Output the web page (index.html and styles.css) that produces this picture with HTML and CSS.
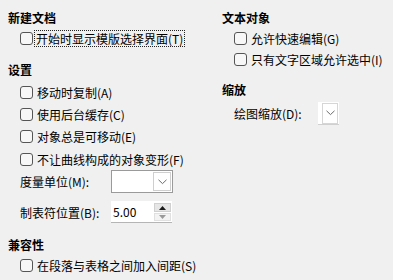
FILE: index.html
```html
<!DOCTYPE html>
<html lang="zh-CN">
<head>
<meta charset="utf-8">
<link rel="stylesheet" href="styles.css">
</head>
<body>
<div class="page">
  <div class="col col-left">
    <div class="title">新建文档</div>
    <div class="check c1"><span class="box"></span><span class="lbl focus">开始时显示模版选择界面(T)</span></div>

    <div class="title t2">设置</div>
    <div class="check first"><span class="box"></span><span class="lbl">移动时复制(A)</span></div>
    <div class="check"><span class="box"></span><span class="lbl">使用后台缓存(C)</span></div>
    <div class="check"><span class="box"></span><span class="lbl">对象总是可移动(E)</span></div>
    <div class="check"><span class="box"></span><span class="lbl">不让曲线构成的对象变形(F)</span></div>

    <div class="field f1">
      <span class="flabel">度量单位(M):</span>
      <div class="combo">
        <span class="combo-text"></span>
        <span class="combo-btn"><svg width="9" height="6" viewBox="0 0 9 6"><path d="M0.5 0.8 L4.5 4.6 L8.5 0.8" fill="none" stroke="#6b6b6b" stroke-width="1"/></svg></span>
      </div>
    </div>
    <div class="field f2">
      <span class="flabel">制表符位置(B):</span>
      <div class="spin">
        <span class="spin-text">5.00</span>
        <span class="spin-btns">
          <span class="spin-up"><svg width="7" height="4" viewBox="0 0 7 4"><path d="M0 4 L3.5 0 L7 4 Z" fill="#1a1a1a"/></svg></span>
          <span class="spin-down"><svg width="7" height="4" viewBox="0 0 7 4"><path d="M0 0 L3.5 4 L7 0 Z" fill="#9a9a9a"/></svg></span>
        </span>
      </div>
    </div>

    <div class="title t3">兼容性</div>
    <div class="check c3"><span class="box"></span><span class="lbl">在段落与表格之间加入间距(S)</span></div>
  </div>

  <div class="col col-right">
    <div class="title">文本对象</div>
    <div class="check r first-r"><span class="box"></span><span class="lbl">允许快速编辑(G)</span></div>
    <div class="check r"><span class="box"></span><span class="lbl">只有文字区域允许选中(I)</span></div>

    <div class="title t4">缩放</div>
    <div class="field f3">
      <span class="flabel narrow">绘图缩放(D):</span>
      <div class="combo small">
        <span class="combo-btn"><svg width="9" height="6" viewBox="0 0 9 6"><path d="M0.5 0.8 L4.5 4.6 L8.5 0.8" fill="none" stroke="#6b6b6b" stroke-width="1"/></svg></span>
      </div>
    </div>
  </div>
</div>
</body>
</html>
```
FILE: styles.css
```css
html, body {
  margin: 0;
  padding: 0;
  background: #f0f0f0;
}
body {
  width: 393px;
  height: 280px;
  overflow: hidden;
  font-family: "Noto Sans CJK SC", "Noto Sans", sans-serif;
  font-size: 12px;
  color: #000;
}
.page {
  display: flex;
  padding: 8.5px 0 0 8px;
}
.col-left {
  width: 214px;
}
.col-right {
  flex: 1;
}
.title {
  height: 17px;
  line-height: 17px;
  font-weight: bold;
}
.t2 { margin-top: 11.5px; }
.t3 { margin-top: 13px; }
.t4 { margin-top: 11px; }
.check {
  display: flex;
  align-items: center;
  height: 22.33px;
  padding-left: 12px;
}
.check.c1 { margin-top: 1.5px; height: 22px; }
.check.first { margin-top: 3.5px; }
.check.c3 { margin-top: 1px; height: 22px; }
.check.r { height: 21px; }
.check.first-r { margin-top: 2.5px; }
.box {
  width: 11px;
  height: 11px;
  border: 1px solid #555;
  border-radius: 3px;
  background: #f7f7f7;
  flex: none;
}
.lbl {
  margin-left: 4px;
  line-height: 15px;
  white-space: nowrap;
}
.lbl.focus {
  margin-left: 2px;
  padding: 0 1px;
  outline: 1px dotted #222;
  outline-offset: 0;
}
.field {
  display: flex;
  align-items: center;
  padding-left: 12px;
}
.f1 { height: 23px; margin-top: 0; }
.f2 { height: 22px; margin-top: 8px; }
.f3 { height: 23px; margin-top: 3.5px; }
.flabel {
  width: 91px;
  flex: none;
  white-space: nowrap;
}
.flabel.narrow { width: 84px; }
.combo {
  display: flex;
  width: 62px;
  height: 23px;
  box-sizing: border-box;
  border: 1px solid #9a9a9a;
  background: #fff;
}
.combo-text { flex: 1; }
.combo-btn {
  width: 18px;
  box-sizing: border-box;
  margin: 1px 1px 1px 0;
  border: 1px solid #cfcfcf;
  background: #fff;
  display: flex;
  align-items: center;
  justify-content: center;
}
.combo.small {
  width: 21px;
  border: none;
  border-bottom: 1px solid #d0d0d0;
  padding-left: 4px;
}
.combo.small .combo-btn {
  width: 16px;
  margin: 1px 1px 0 0;
  border-color: #d6d6d6;
}
.spin {
  display: flex;
  width: 61px;
  height: 22px;
  box-sizing: border-box;
  background: #fff;
  border-bottom: 1px solid #b5b5b5;
}
.spin-text {
  flex: 1;
  padding-left: 2px;
  line-height: 21px;
}
.spin-btns {
  width: 17px;
  display: flex;
  flex-direction: column;
  padding: 2px 1px 1px 0;
  gap: 1px;
}
.spin-up, .spin-down {
  flex: 1;
  display: flex;
  align-items: center;
  justify-content: center;
  background: #e6e6e6;
  border: 1px solid #d0d0d0;
}
.spin-down {
  background: #f3f3f3;
  border-color: #e0e0e0;
}
```
